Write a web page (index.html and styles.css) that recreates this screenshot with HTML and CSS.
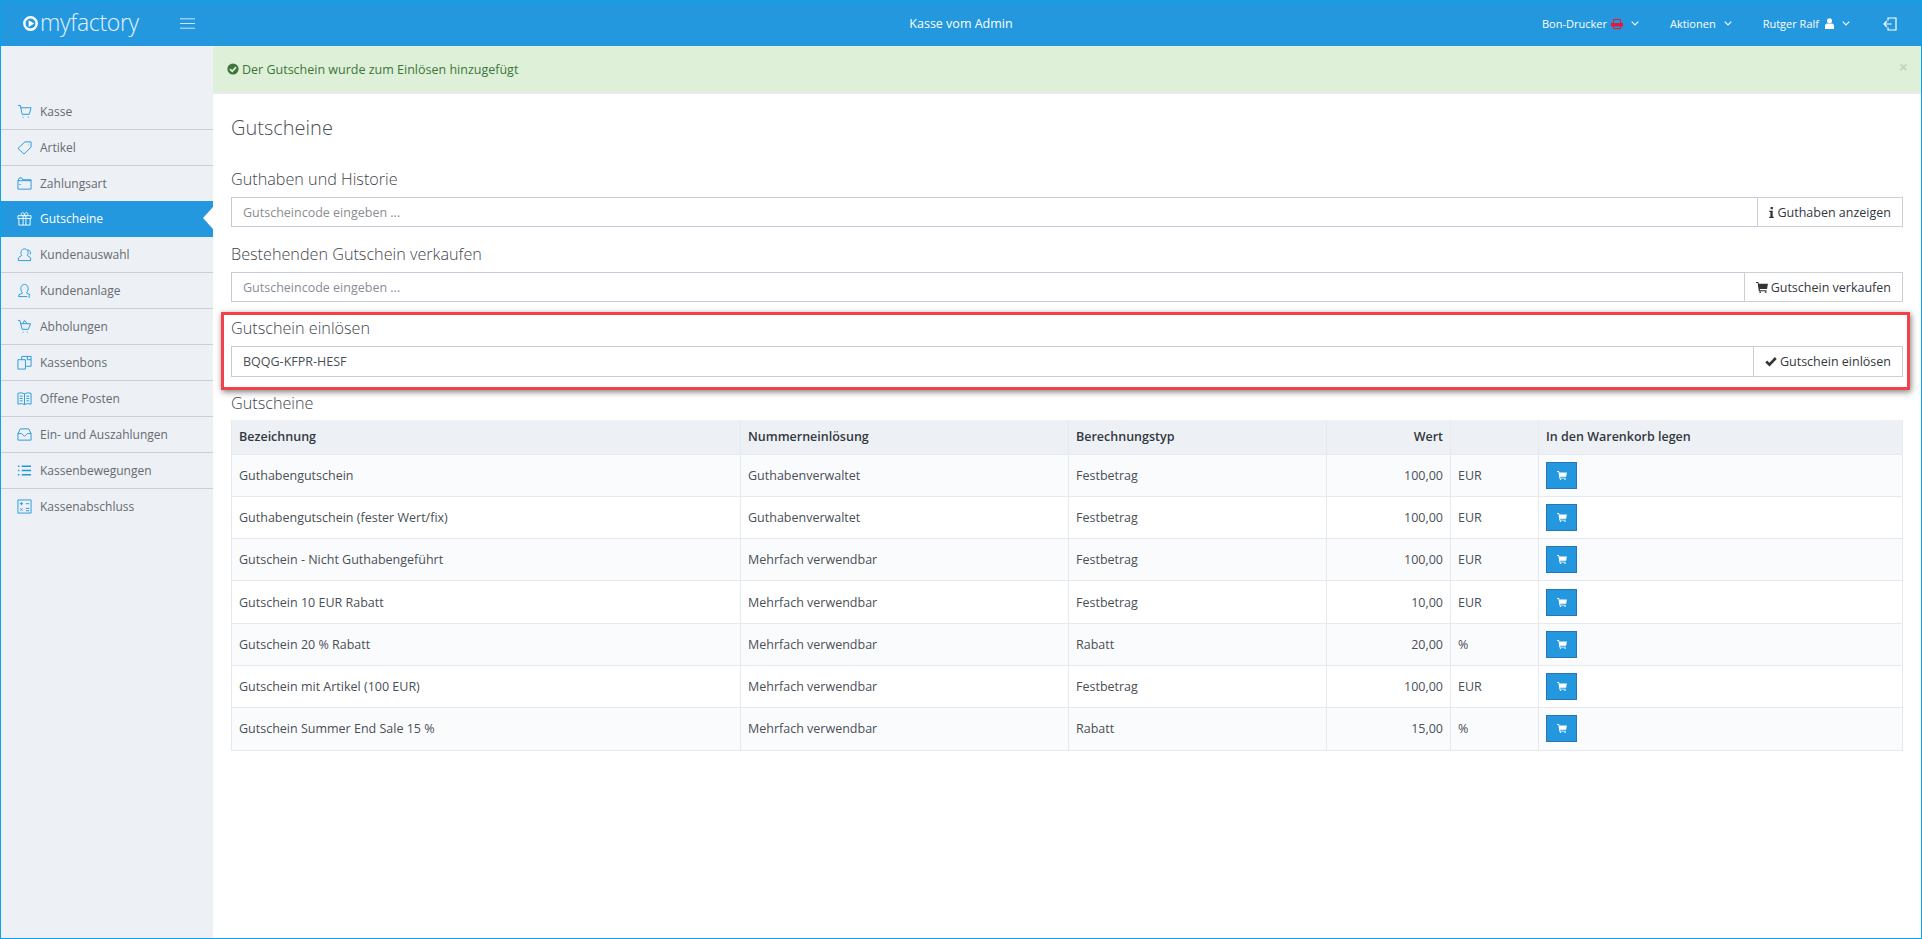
FILE: index.html
```html
<!DOCTYPE html>
<html lang="de">
<head>
    <meta charset="UTF-8">
    <title>Kasse vom Admin</title>
    <link rel="stylesheet" href="styles.css">
</head>
<body>
    <header class="topbar">
        <div class="brand">
            <svg class="brand-icon" viewBox="0 0 16 16"><circle cx="8" cy="8" r="6.6" fill="none" stroke="#fff" stroke-width="2.6"/><path d="M6 4.4L12 8L6 11.6z" fill="#fff"/></svg>
            <span class="brand-name">myfactory</span>
            <svg class="burger" viewBox="0 0 16 11"><path d="M0 .5H16M0 5.5H16M0 10.5H16" stroke="#d6ebfa" stroke-width="1"/></svg>
        </div>
        <div class="topbar-title">Kasse vom Admin</div>
        <nav class="topnav">
            <span class="topnav-item">Bon-Drucker
                <svg class="printer" viewBox="0 0 12 10"><path d="M2.500 4.500V.5H9.500V4.500M2.500 6.500V9.500H9.500V6.500" fill="none" stroke="#f0142f" stroke-width="1"/><path d="M0 4H12V7.500H0z" fill="#f0142f"/></svg>
                <svg class="chev" viewBox="0 0 8 5"><path d="M.7.7L4 4L7.3.7" fill="none" stroke="#fff" stroke-width="1.1"/></svg>
            </span>
            <span class="topnav-item">Aktionen
                <svg class="chev" viewBox="0 0 8 5"><path d="M.7.7L4 4L7.3.7" fill="none" stroke="#fff" stroke-width="1.1"/></svg>
            </span>
            <span class="topnav-item">Rutger Ralf
                <svg class="user" viewBox="0 0 10 12"><circle cx="5" cy="3" r="2.8" fill="#fff"/><path d="M0 12V9Q0 6 2.500 6H7.500Q10 6 10 9V12z" fill="#fff"/></svg>
                <svg class="chev" viewBox="0 0 8 5"><path d="M.7.7L4 4L7.3.7" fill="none" stroke="#fff" stroke-width="1.1"/></svg>
            </span>
            <svg class="logout" viewBox="0 0 14 14"><path d="M5 3.500V1H13V13H5V10.500M8.500 7H1M4 4L1 7L4 10" fill="none" stroke="#fff" stroke-width="1.2"/></svg>
        </nav>
    </header>

    <div class="layout">
        <aside class="sidebar">
            <a class="side-item"><svg viewBox="0 0 16 16"><path d="M1 1.500H3.500L5.500 11H13L15 4H4M6.500 13.500v1M12 13.500v1" /></svg>Kasse</a>
            <a class="side-item"><svg viewBox="0 0 16 16"><path d="M1 9L8.500 2H15V7.500L7.500 15zM12 5h.5" /></svg>Artikel</a>
            <a class="side-item"><svg viewBox="0 0 16 16"><path d="M1 5V14H15V4H6L5 2H2.500L1 5H15M2.500 9H4" /></svg>Zahlungsart</a>
            <a class="side-item active"><svg viewBox="0 0 16 16"><path d="M1 5H15V8H1zM2 8V15H14V8M6.500 5V15M9.500 5V15M8 5C5 5 3.500 3.500 5 2S8 3 8 5C8 3 9.500 .5 11 2S11 5 8 5" /></svg>Gutscheine</a>
            <a class="side-item"><svg viewBox="0 0 16 16"><path d="M5 9C3.500 7 4 2 8 2S12.500 7 11 9L14.500 11.500V14.500H1.500V11.500zM11 3C14 3 15 6 14 8" /></svg>Kundenauswahl</a>
            <a class="side-item"><svg viewBox="0 0 16 16"><path d="M5.500 10C3 7 4 1.500 8 1.500S13 7 10.500 10V11L14 12.500M2 14.500V12.500L5.500 11V10M1.500 14.500H11M13 13v3" /></svg>Kundenanlage</a>
            <a class="side-item"><svg viewBox="0 0 16 16"><path d="M1 1.500H3L5.500 11H12L14.500 5H4M6 5L8 1.500L11 5M6.500 13.500v1M11 13.500v1" /></svg>Abholungen</a>
            <a class="side-item"><svg viewBox="0 0 16 16"><path d="M1 5H9V15H1zM5 5V1.500H15V12H9M11 1.500V5H15" /></svg>Kassenbons</a>
            <a class="side-item"><svg viewBox="0 0 16 16"><path d="M1 2.500Q5 1 8 3Q11 1 15 2.500V14Q11 12.500 8 14.500Q5 12.500 1 14ZM8 3V14.500M3 5.500H6M3 8H6M3 10.500H6M10 5.500H13M10 8H13M10 10.500H13" /></svg>Offene Posten</a>
            <a class="side-item"><svg viewBox="0 0 16 16"><path d="M1 7L3.500 2H12.500L15 7V14H1ZM1 7H5L8 10L11 7H15" /></svg>Ein- und Auszahlungen</a>
            <a class="side-item"><svg viewBox="0 0 16 16"><path d="M5 3.500H15M5 8H15M5 12.500H15M1 3.500H2.500M1 8H2.500M1 12.500H2.500" stroke-width="1.500"/></svg>Kassenbewegungen</a>
            <a class="side-item"><svg viewBox="0 0 16 16"><path d="M1 1H15V15H1zM3 5H6.500M4.750 3.250V6.750M9.500 5H13M3.500 10L6 12.500M6 10L3.500 12.500M9.500 10H13M9.500 12.500H13" /></svg>Kassenabschluss</a>
        </aside>

        <main class="content">
            <div class="alert">
                <span class="alert-text">
                    <svg class="alert-icon" viewBox="0 0 12 12"><circle cx="6" cy="6" r="5.600" fill="#3c763d"/><path d="M3 6.200L5.200 8.300L9 4.200" fill="none" stroke="#dff0d8" stroke-width="1.700"/></svg>
                    Der Gutschein wurde zum Einlösen hinzugefügt
                </span>
                <span class="alert-close">×</span>
            </div>

            <div class="page">
                <h1 class="page-title">Gutscheine</h1>

                <h2 class="section-title first">Guthaben und Historie</h2>
                <div class="input-group">
                    <input class="code-input" type="text" placeholder="Gutscheincode eingeben ...">
                    <button class="addon-btn">
                        <svg class="btn-icon info" viewBox="0 0 5 12"><path d="M1.500 0H4V2.500H1.500zM0 4H3.800V10.500H5V12H0V10.500H1.300V5.500H0z" fill="#333"/></svg>
                        Guthaben anzeigen
                    </button>
                </div>

                <h2 class="section-title">Bestehenden Gutschein verkaufen</h2>
                <div class="input-group">
                    <input class="code-input" type="text" placeholder="Gutscheincode eingeben ...">
                    <button class="addon-btn">
                        <svg class="btn-icon" viewBox="0 0 13 12"><path d="M0 0H2.500L3 2H13L12 7.500H4L4.300 9H11.500V10H3L1.800 1.200H0z" fill="#333"/><circle cx="4.500" cy="11" r="1" fill="#333"/><circle cx="10.500" cy="11" r="1" fill="#333"/></svg>
                        Gutschein verkaufen
                    </button>
                </div>

                <div class="highlight">
                    <h2 class="section-title">Gutschein einlösen</h2>
                    <div class="input-group">
                        <input class="code-input" type="text" value="BQQG-KFPR-HESF">
                        <button class="addon-btn">
                            <svg class="btn-icon" viewBox="0 0 12 10"><path d="M1.200 5L4.500 8.200L10.800 1.500" fill="none" stroke="#333" stroke-width="2.600"/></svg>
                            Gutschein einlösen
                        </button>
                    </div>
                </div>

                <h2 class="section-title table-title">Gutscheine</h2>
                <table class="voucher-table">
                    <thead>
                        <tr>
                            <th class="col-name">Bezeichnung</th>
                            <th class="col-mode">Nummerneinlösung</th>
                            <th class="col-type">Berechnungstyp</th>
                            <th class="col-value">Wert</th>
                            <th class="col-unit"></th>
                            <th>In den Warenkorb legen</th>
                        </tr>
                    </thead>
                    <tbody>
                        <tr><td>Guthabengutschein</td><td>Guthabenverwaltet</td><td>Festbetrag</td><td class="col-value">100,00</td><td>EUR</td><td><button class="cart-btn"><svg viewBox="0 0 13 12"><path d="M0 0H2.500L3 2H13L12 7.500H4L4.300 9H11.500V10H3L1.800 1.200H0z" fill="#fff"/><circle cx="4.500" cy="11" r="1" fill="#fff"/><circle cx="10.500" cy="11" r="1" fill="#fff"/></svg></button></td></tr>
                        <tr><td>Guthabengutschein (fester Wert/fix)</td><td>Guthabenverwaltet</td><td>Festbetrag</td><td class="col-value">100,00</td><td>EUR</td><td><button class="cart-btn"><svg viewBox="0 0 13 12"><path d="M0 0H2.500L3 2H13L12 7.500H4L4.300 9H11.500V10H3L1.800 1.200H0z" fill="#fff"/><circle cx="4.500" cy="11" r="1" fill="#fff"/><circle cx="10.500" cy="11" r="1" fill="#fff"/></svg></button></td></tr>
                        <tr><td>Gutschein - Nicht Guthabengeführt</td><td>Mehrfach verwendbar</td><td>Festbetrag</td><td class="col-value">100,00</td><td>EUR</td><td><button class="cart-btn"><svg viewBox="0 0 13 12"><path d="M0 0H2.500L3 2H13L12 7.500H4L4.300 9H11.500V10H3L1.800 1.200H0z" fill="#fff"/><circle cx="4.500" cy="11" r="1" fill="#fff"/><circle cx="10.500" cy="11" r="1" fill="#fff"/></svg></button></td></tr>
                        <tr><td>Gutschein 10 EUR Rabatt</td><td>Mehrfach verwendbar</td><td>Festbetrag</td><td class="col-value">10,00</td><td>EUR</td><td><button class="cart-btn"><svg viewBox="0 0 13 12"><path d="M0 0H2.500L3 2H13L12 7.500H4L4.300 9H11.500V10H3L1.800 1.200H0z" fill="#fff"/><circle cx="4.500" cy="11" r="1" fill="#fff"/><circle cx="10.500" cy="11" r="1" fill="#fff"/></svg></button></td></tr>
                        <tr><td>Gutschein 20 % Rabatt</td><td>Mehrfach verwendbar</td><td>Rabatt</td><td class="col-value">20,00</td><td>%</td><td><button class="cart-btn"><svg viewBox="0 0 13 12"><path d="M0 0H2.500L3 2H13L12 7.500H4L4.300 9H11.500V10H3L1.800 1.200H0z" fill="#fff"/><circle cx="4.500" cy="11" r="1" fill="#fff"/><circle cx="10.500" cy="11" r="1" fill="#fff"/></svg></button></td></tr>
                        <tr><td>Gutschein mit Artikel (100 EUR)</td><td>Mehrfach verwendbar</td><td>Festbetrag</td><td class="col-value">100,00</td><td>EUR</td><td><button class="cart-btn"><svg viewBox="0 0 13 12"><path d="M0 0H2.500L3 2H13L12 7.500H4L4.300 9H11.500V10H3L1.800 1.200H0z" fill="#fff"/><circle cx="4.500" cy="11" r="1" fill="#fff"/><circle cx="10.500" cy="11" r="1" fill="#fff"/></svg></button></td></tr>
                        <tr><td>Gutschein Summer End Sale 15 %</td><td>Mehrfach verwendbar</td><td>Rabatt</td><td class="col-value">15,00</td><td>%</td><td><button class="cart-btn"><svg viewBox="0 0 13 12"><path d="M0 0H2.500L3 2H13L12 7.500H4L4.300 9H11.500V10H3L1.800 1.200H0z" fill="#fff"/><circle cx="4.500" cy="11" r="1" fill="#fff"/><circle cx="10.500" cy="11" r="1" fill="#fff"/></svg></button></td></tr>
                    </tbody>
                </table>
            </div>
        </main>
    </div>
</body>
</html>
```

FILE: styles.css
```css
* {
    margin: 0;
    padding: 0;
    box-sizing: border-box;
}
html, body {
    height: 100%;
}
body {
    font-family: "Open Sans", sans-serif;
    font-size: 12.5px;
    color: #4a4f57;
    background: #fff;
    border: 1px solid #0aa3ea;
    display: flex;
    flex-direction: column;
    overflow: hidden;
}
.topbar {
    height: 45px;
    background: #2398df;
    color: #fff;
    display: flex;
    align-items: center;
    position: relative;
    flex-shrink: 0;
}
.brand {
    display: flex;
    align-items: center;
    padding-left: 22px;
}
.brand-icon {
    width: 15px;
    height: 15px;
    margin-right: 2px;
}
.brand-name {
    font-size: 23px;
    font-weight: 300;
    letter-spacing: -0.3px;
    line-height: 30px;
    color: #e4f2fc;
    margin-top: -4px;
}
.burger {
    width: 15px;
    height: 11px;
    margin-left: 41px;
}
.topbar-title {
    position: absolute;
    left: 0;
    right: 0;
    text-align: center;
    pointer-events: none;
}
.topnav {
    margin-left: auto;
    display: flex;
    align-items: center;
    padding-right: 24px;
    font-size: 11px;
}
.topnav-item {
    display: flex;
    align-items: center;
    margin-right: 31px;
}
.printer {
    width: 12px;
    height: 10px;
    margin-left: 4px;
}
.user {
    width: 9px;
    height: 11px;
    margin-left: 6px;
}
.chev {
    width: 8px;
    height: 5px;
    margin-left: 8px;
}
.logout {
    width: 14px;
    height: 14px;
    margin-left: 2px;
}

.layout {
    flex: 1;
    display: flex;
    min-height: 0;
}
.sidebar {
    width: 212px;
    background: #edf1f5;
    padding-top: 48px;
    flex-shrink: 0;
    font-size: 12px;
}
.side-item {
    display: flex;
    align-items: center;
    height: 36px;
    padding: 0 0 1px 16px;
    border-bottom: 1px solid #ccd0d5;
    color: #666a70;
    position: relative;
}
.side-item:last-child {
    border-bottom: none;
}
.side-item svg {
    width: 15px;
    height: 15px;
    margin-right: 8px;
    fill: none;
    stroke: #2398df;
    stroke-width: 1;
}
.side-item.active {
    background: #2398df;
    color: #fff;
    border-bottom: none;
    margin-top: -1px;
}
.side-item.active svg {
    stroke: #fff;
}
.side-item.active::after {
    content: "";
    position: absolute;
    right: 0;
    top: 6px;
    border: 11.5px solid transparent;
    border-left-width: 0;
    border-right: 10px solid #fff;
}

.content {
    flex: 1;
    min-width: 0;
}
.alert {
    height: 48px;
    background: #dff0d8;
    border-bottom: 2px solid #e8e9f1;
    color: #3c763d;
    display: flex;
    align-items: center;
    justify-content: space-between;
    padding: 0 13px 0 14px;
}
.alert-text {
    display: flex;
    align-items: center;
}
.alert-icon {
    width: 12px;
    height: 12px;
    margin-right: 3px;
}
.alert-close {
    font-size: 16px;
    font-weight: 700;
    color: #bfd8bb;
    margin-top: -4px;
}
.page {
    padding: 0 18px;
}
.page-title {
    font-size: 20px;
    font-weight: 300;
    line-height: 28px;
    padding-top: 20px;
    height: 48px;
    color: #4a4f57;
}
.section-title {
    font-size: 16.2px;
    font-weight: 300;
    line-height: 20px;
    color: #3f444c;
    margin: 17px 0 8px;
}
.section-title.first {
    margin-top: 27px;
}
.input-group {
    display: flex;
    height: 30px;
}
.code-input {
    flex: 1;
    min-width: 0;
    height: 100%;
    border: 1px solid #c5cad9;
    padding: 0 11px;
    font: 12.5px "Open Sans", sans-serif;
    color: #4a4f57;
    outline: none;
}
.code-input::placeholder {
    color: #8a8d92;
    opacity: 1;
}
.addon-btn {
    display: flex;
    align-items: center;
    height: 100%;
    padding: 0 11px;
    background: #fff;
    border: 1px solid #ccd0d5;
    margin-left: -1px;
    font: 12.5px "Open Sans", sans-serif;
    color: #33383f;
}
.btn-icon {
    width: 12px;
    height: 11px;
    margin-right: 3px;
}
.btn-icon.info {
    width: 5px;
}
.highlight {
    margin: 10px -7px 0 -10px;
    padding: 3px 4px 10px 7px;
    border: 3px solid #f4404a;
    box-shadow: 1px 2px 6px rgba(0, 0, 0, 0.5);
}
.highlight .section-title {
    margin: 0 0 7px;
    line-height: 21px;
}
.highlight .input-group {
    height: 31px;
}
.section-title.table-title {
    margin: 3px 0 7px;
}
.voucher-table {
    width: 100%;
    border-collapse: collapse;
    table-layout: fixed;
}
.voucher-table th {
    height: 34px;
    text-align: left;
    font-weight: 600;
    color: #33383f;
    background: #edf1f5;
    padding: 0 7px;
    border: 1px solid #e6e9ed;
    border-top: none;
}
.voucher-table td {
    height: 42.3px;
    padding: 0 7px;
    border: 1px solid #e6e9ed;
    color: #4a4f57;
}
.voucher-table tbody tr:nth-child(odd) td {
    background: #fafbfc;
}
.col-name {
    width: 509px;
}
.col-mode {
    width: 328px;
}
.col-type {
    width: 258px;
}
.voucher-table .col-value {
    width: 124px;
    text-align: right;
}
.col-unit {
    width: 88px;
}
.cart-btn {
    display: flex;
    align-items: center;
    justify-content: center;
    width: 31px;
    height: 27px;
    background: #2398df;
    border: 1px solid #2a76b5;
}
.cart-btn svg {
    width: 10px;
    height: 9px;
}
```
